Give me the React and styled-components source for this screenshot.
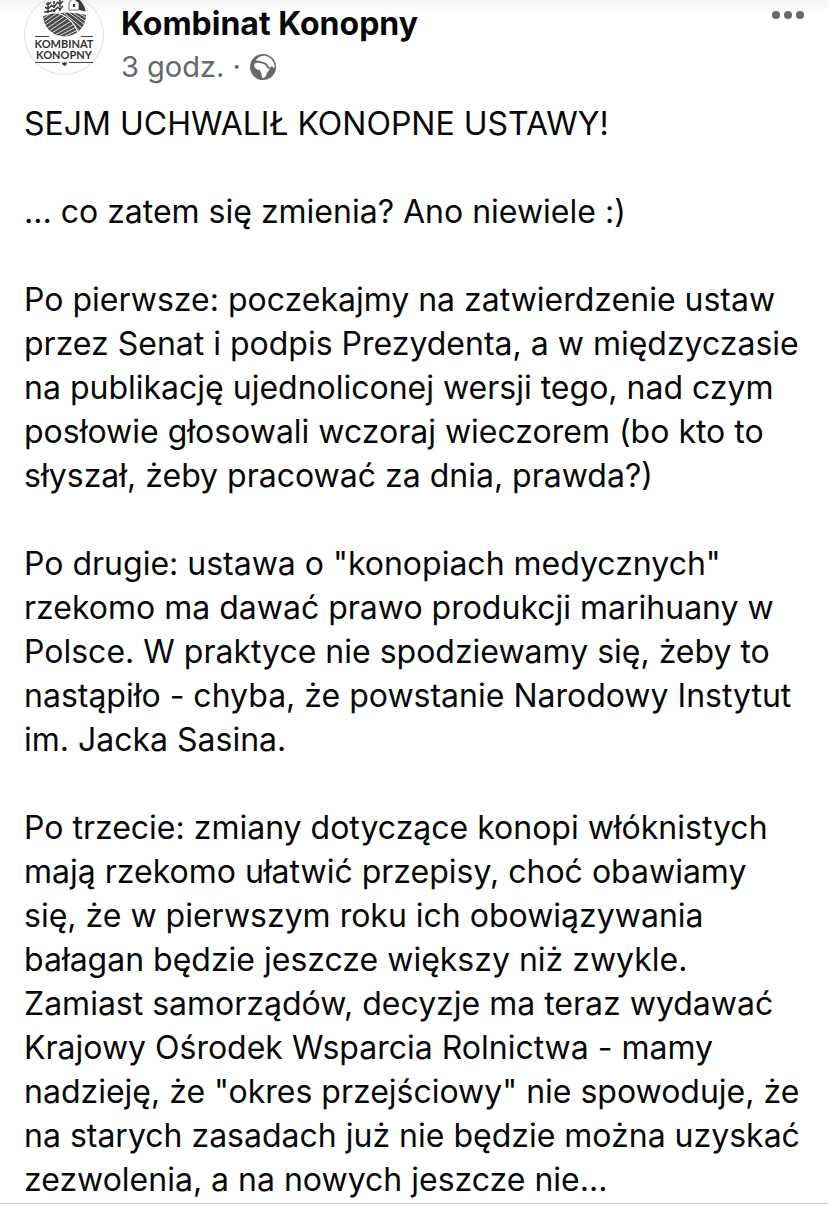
import React from "react";
import styled, { createGlobalStyle } from "styled-components";

const GlobalStyle = createGlobalStyle`
  * { box-sizing: border-box; }
  body {
    margin: 0;
    background: #fff;
    color: #080809;
    font-family: Inter, "Liberation Sans", sans-serif;
  }
`;

const Post = styled.article`
  padding-bottom: 1px;
  border-bottom: 1px solid #c9cbcd;
`;

const Header = styled.header`
  display: flex;
  align-items: flex-start;
  gap: 17px;
  height: 102px;
  padding: 0 24px;
  background: linear-gradient(#f4f4f4, #fff 14px);
`;

const AvatarLink = styled.a`
  display: block;
  flex: none;
  width: 80px;
  height: 75px;
`;

const Byline = styled.div`
  flex: 1;
  min-width: 0;
  padding-top: 4px;
`;

const Author = styled.h1`
  margin: 0;
  font-size: 32px;
  line-height: 40px;
  font-weight: 700;
`;

const AuthorLink = styled.a`
  color: inherit;
  text-decoration: none;
`;

const Meta = styled.div`
  display: flex;
  align-items: center;
  gap: 8px;
  padding-top: 3px;
  color: #65686c;
  font-size: 29px;
  line-height: 40px;
`;

const MoreButton = styled.button`
  display: flex;
  gap: 4px;
  padding: 11px 0;
  border: 0;
  background: none;
  cursor: pointer;
`;

const Dot = styled.span`
  width: 8px;
  height: 8px;
  border-radius: 50%;
  background: #65686c;
`;

const Body = styled.div`
  display: grid;
  gap: 44px;
  padding: 0 0 0 24px;
  font-size: 32px;
  line-height: 44px;
`;

const Paragraph = styled.p`
  margin: 0;
  white-space: pre-line;
`;

const paragraphs = [
  "SEJM UCHWALIŁ KONOPNE USTAWY!",
  "... co zatem się zmienia? Ano niewiele :)",
  `Po pierwsze: poczekajmy na zatwierdzenie ustaw
przez Senat i podpis Prezydenta, a w międzyczasie
na publikację ujednoliconej wersji tego, nad czym
posłowie głosowali wczoraj wieczorem (bo kto to
słyszał, żeby pracować za dnia, prawda?)`,
  `Po drugie: ustawa o "konopiach medycznych"
rzekomo ma dawać prawo produkcji marihuany w
Polsce. W praktyce nie spodziewamy się, żeby to
nastąpiło - chyba, że powstanie Narodowy Instytut
im. Jacka Sasina.`,
  `Po trzecie: zmiany dotyczące konopi włóknistych
mają rzekomo ułatwić przepisy, choć obawiamy
się, że w pierwszym roku ich obowiązywania
bałagan będzie jeszcze większy niż zwykle.
Zamiast samorządów, decyzje ma teraz wydawać
Krajowy Ośrodek Wsparcia Rolnictwa - mamy
nadzieję, że "okres przejściowy" nie spowoduje, że
na starych zasadach już nie będzie można uzyskać
zezwolenia, a na nowych jeszcze nie...`,
];

function Logo() {
  return (
    <svg width="80" height="75" viewBox="0 5 80 75" role="img" aria-label="Kombinat Konopny">
      <defs>
        <clipPath id="emblem">
          <circle cx="40.5" cy="20" r="21.5" />
        </clipPath>
        <clipPath id="leftField">
          <path d="M18 21Q26 17 34 18Q44 21 51 31L56 42H18Z" />
        </clipPath>
        <clipPath id="rightField">
          <path d="M34 18Q48 15 64 20V42H56L51 31Q44 21 34 18Z" />
        </clipPath>
      </defs>
      <circle cx="40" cy="40" r="39.5" fill="none" stroke="#dedfe0" />
      <g clipPath="url(#emblem)" fill="none">
        <path d="M18 21Q26 17 34 18Q48 15 64 20V44H18Z" fill="#4a4a4a" />
        <g clipPath="url(#leftField)" stroke="#f4f4f4" strokeWidth="0.9">
          <path d="M16 26L30 16M16 30L36 16M17 33L40 17M19 36L44 19M22 38L46 22M26 39L49 25M29 41L52 28M33 42L54 31M37 43L56 34M42 43L58 37" />
        </g>
        <g clipPath="url(#rightField)" stroke="#f4f4f4" strokeWidth="0.9">
          <path d="M36 18L60 40M40 18L62 36M44 17L64 32M48 17L64 28M53 17L64 24" />
        </g>
        <path d="M18 21Q26 17 34 18Q44 21 51 31L56 42M34 18Q48 15 64 20" stroke="#fff" strokeWidth="1.2" />
        <g stroke="#3c3c3c" strokeWidth="1.6">
          <path d="M24 18V3M30 17V5M36 16V3" strokeDasharray="3 1" />
          <path d="M21 12L24 14L27 11M21 8L24 10L27 7M27 15L30 16L33 13M27 10L30 12L33 8M33 12L36 14L39 11M33 7L36 9L39 6M20 17L28 16" />
        </g>
        <path d="M45 15V8L49 3L55 8V15Z" fill="#fff" stroke="#555" strokeWidth="0.8" />
        <path d="M49 3H60L64 17L55 15V8Z" fill="#3a3a3a" />
        <path d="M49 9H51V12H49Z" fill="#333" />
      </g>
      <path d="M11 41.5H25M57 41.5H69M11 67.5H36M45 67.5H69" stroke="#444" />
      <text
        fill="#333"
        fontFamily="Lato, sans-serif"
        fontSize="11"
        fontWeight="700"
        textAnchor="middle"
      >
        <tspan x="40" y="53">KOMBINAT</tspan>
        <tspan x="40" y="64">KONOPNY</tspan>
      </text>
      <path d="M38 67L40 68L40.5 66L41 68L43 67L42.5 69.5L40.5 71L38.5 69.5Z" fill="#333" />
    </svg>
  );
}

function Globe() {
  return (
    <svg width="28" height="28" viewBox="0 0 28 28" role="img" aria-label="Publiczne">
      <circle cx="14" cy="14" r="13" fill="#65686c" />
      <path
        d="M5.6 10.6C8 9.4 10.6 9.6 12.6 10.4C14.6 10.4 16.6 11.4 17.4 13.4L18.6 15.6H20.8C20.4 17.6 18.6 18.6 17.8 20.4C17.2 22.4 16.2 24.6 14.2 25.2C12.6 24.4 12.8 22 12.2 20.2C11.6 18.8 11.2 17.6 10.6 16.8C8.6 17 6 15.4 5.2 13.4Z"
        fill="#fff"
      />
      <path
        d="M6.6 7.4C8.6 4.2 12.6 2.4 16 2.8C21 3.6 25.2 8 25.6 13.6L24.6 15.4L23 12.6L21.4 14.8L19.6 13.8L18 10.8C16.4 9.4 14.6 9 12.8 8.8L10 7.8Z"
        fill="#fff"
      />
    </svg>
  );
}

export default function App() {
  return (
    <>
      <GlobalStyle />
      <Post>
        <Header>
          <AvatarLink href="#profil">
            <Logo />
          </AvatarLink>
          <Byline>
            <Author>
              <AuthorLink href="#profil">Kombinat Konopny</AuthorLink>
            </Author>
            <Meta>
              <time>3 godz.</time>
              <span>·</span>
              <Globe />
            </Meta>
          </Byline>
          <MoreButton type="button" aria-label="Więcej">
            <Dot />
            <Dot />
            <Dot />
          </MoreButton>
        </Header>
        <Body>
          {paragraphs.map((text) => (
            <Paragraph key={text}>{text}</Paragraph>
          ))}
        </Body>
      </Post>
    </>
  );
}
